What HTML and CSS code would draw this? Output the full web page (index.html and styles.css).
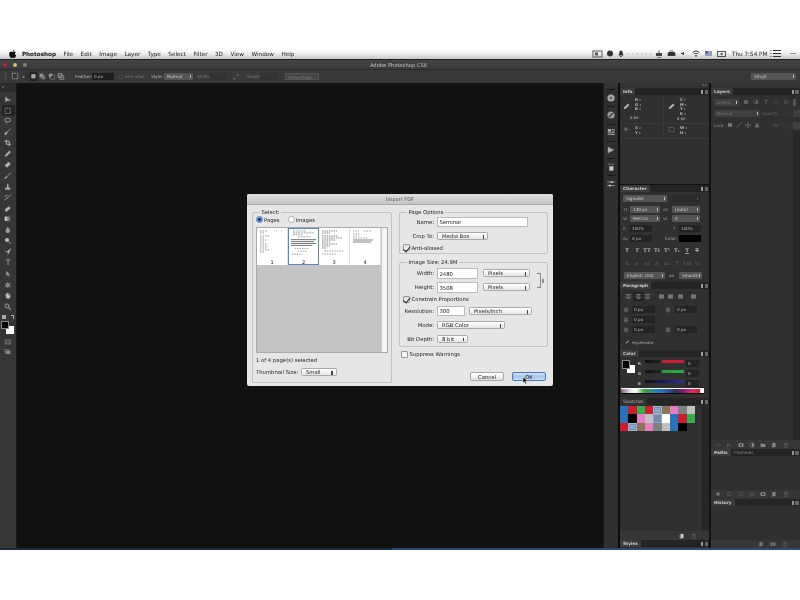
FILE: index.html
```html
<!DOCTYPE html>
<html lang="en">
<head>
<meta charset="utf-8">
<title>Adobe Photoshop CS6 - Import PDF</title>
<link rel="stylesheet" href="styles.css">
</head>
<body>
<svg class="defs" aria-hidden="true">
  <symbol id="trash" viewBox="0 0 10 10"><path d="M2 2.5h6M4 2.5V1.5h2v1M3 3.5h4v5.500H3z" fill="none" stroke="currentColor"/></symbol>
  <symbol id="page" viewBox="0 0 10 10"><path d="M2.500 1.500h5v7h-5z" fill="currentColor"/><path d="M1.500 3v6.500h4" fill="none" stroke="currentColor" stroke-width=".6"/></symbol>
  <symbol id="folder" viewBox="0 0 10 10"><path d="M1 2.500h3l1 1h4v5H1z" fill="currentColor"/></symbol>
  <symbol id="link" viewBox="0 0 10 10"><path d="M1 5a2 2 0 0 1 2-2h1M1 5a2 2 0 0 0 2 2h1M9 5a2 2 0 0 0-2-2H6M9 5a2 2 0 0 1-2 2H6M3.500 5h3" fill="none" stroke="currentColor"/></symbol>
  <symbol id="mask" viewBox="0 0 10 10"><path fill-rule="evenodd" d="M1 2h8v6.500H1zM5 3.500a1.700 1.700 0 1 0 .01 0z" fill="currentColor"/></symbol>
  <symbol id="adj" viewBox="0 0 10 10"><circle cx="5" cy="5" r="3.500" fill="none" stroke="currentColor"/><path d="M5 1.500a3.500 3.500 0 0 1 0 7z" fill="currentColor"/></symbol>
  <symbol id="dot" viewBox="0 0 10 10"><circle cx="5" cy="5" r="3" fill="currentColor"/></symbol>
  <symbol id="ring" viewBox="0 0 10 10"><circle cx="5" cy="5" r="3" fill="none" stroke="currentColor"/></symbol>
  <symbol id="sel" viewBox="0 0 10 10"><rect x="2" y="2" width="6" height="6" fill="none" stroke="currentColor" stroke-dasharray="1.500 1"/></symbol>
  <symbol id="diamond" viewBox="0 0 10 10"><path d="M5 1l4 4-4 4-4-4z" fill="none" stroke="currentColor"/></symbol>
  <symbol id="cam" viewBox="0 0 10 10"><path fill-rule="evenodd" d="M1 2.500h8v6H1zM5 4a1.300 1.300 0 1 0 .01 0z" fill="currentColor"/></symbol>
  <symbol id="lock" viewBox="0 0 10 10"><path d="M2.500 4.500h5v4.500h-5z" fill="currentColor"/><path d="M3.500 4.500V3a1.500 1.500 0 0 1 3 0v1.500" fill="none" stroke="currentColor"/></symbol>
  <symbol id="move" viewBox="0 0 10 10"><path d="M5 .5v9M.5 5h9M3.500 2L5 .5 6.500 2M3.500 8L5 9.500 6.500 8M2 3.500L.5 5 2 6.500M8 3.500L9.500 5 8 6.500" fill="none" stroke="currentColor"/></symbol>
  <symbol id="picker" viewBox="0 0 10 10"><path d="M1 9l1-3 4-4 2 2-4 4z" fill="currentColor"/><path d="M6.500 1.500l2 2" stroke="currentColor" stroke-width="2"/></symbol>
  <symbol id="block" viewBox="0 0 10 10"><rect x="1.500" y="2" width="7" height="6" fill="currentColor"/></symbol>
  <symbol id="lines" viewBox="0 0 10 10"><path d="M1 2h8M2.500 4h5M1 6h8M2.500 8h5" fill="none" stroke="currentColor"/></symbol>
</svg>

<div class="screen">
  <header class="menubar">
    <svg class="apple" viewBox="0 0 10 12"><path d="M7.300 1c0 .9-.8 1.900-1.900 1.800C5.300 1.900 6.200 1 7.300 1zM5.200 3.500c.5 0 1.100-.5 2-.5.700 0 1.400.3 1.900 1-1.600 1-1.300 3.100.4 3.800-.5 1.300-1.400 3-2.500 3-.6 0-.9-.4-1.700-.4s-1.100.4-1.700.4C2.500 10.800 1 8.400 1 6.300 1 4.200 2.300 3 3.600 3c.7 0 1.200.5 1.600.5z" fill="#111"/></svg>
    <nav class="menus">
      <span class="menu-app">Photoshop</span><span>File</span><span>Edit</span><span>Image</span><span>Layer</span><span>Type</span><span>Select</span><span>Filter</span><span>3D</span><span>View</span><span>Window</span><span>Help</span>
    </nav>
    <svg class="status" viewBox="0 0 138 11">
      <rect x="3" y="3" width="9" height="6" fill="none" stroke="#555"/><rect x="5" y="4.500" width="3" height="3" fill="#555"/>
      <circle cx="20" cy="5.500" r="3" fill="#333"/>
      <path d="M31 2.500c1.300 0 1.700 1 1.700 2.700l.8 2.300h-5l.8-2.300c0-1.700.4-2.700 1.700-2.700zM30.200 8h1.600v1h-1.600z" fill="#333"/>
      <path d="M38 6h.8M42.500 6h.8M47 6h.8M51 6h.8M55.500 6h.8M60 6h.8" stroke="#666" stroke-width=".8"/>
      <path d="M66 5h6v3h-6z" fill="#444"/><path d="M69 2v3M67 9.500h4" stroke="#555" stroke-width=".8"/>
      <path d="M78.500 4h6l.8 1.500v2.500h-7.600v-2.500z" fill="#333"/><path d="M79.500 3h4" stroke="#444" stroke-width=".8"/>
      <path d="M91 5h1.200l1.800-1.200v3.400L92.200 6H91z" fill="#333"/>
      <path d="M102.500 4.300a5.500 5.500 0 0 1 7 0M104 5.800a3.500 3.500 0 0 1 4 0" fill="none" stroke="#333" stroke-width=".9"/><circle cx="106" cy="7.800" r=".9" fill="#333"/>
      <rect x="115" y="3" width="7" height="5" fill="#9aa0c0"/><rect x="115" y="3" width="3" height="2.500" fill="#5f6a9c"/>
      <rect x="127.500" y="3.500" width="8" height="5" fill="none" stroke="#555"/><path d="M130 6l2.500-1.500v3z" fill="#444"/>
    </svg>
    <span class="clock">Thu 7:54 PM</span>
    <svg class="status-end" viewBox="0 0 33 11">
      <path d="M6 2.500h8M6 5.500h8M6 8.500h8" stroke="#333"/><path d="M3.500 2.500h1M3.500 5.500h1M3.500 8.500h1" stroke="#333"/>
      <path d="M23.500 5.500h1M25.500 5.500h1M27.500 5.500h1" stroke="#333" stroke-width="1.200"/>
    </svg>
  </header>

  <div class="titlebar">
    <span class="lights"><i class="light red"></i><i class="light amber"></i><i class="light grey"></i></span>
    <span class="app-title">Adobe Photoshop CS6</span>
  </div>

  <div class="options">
    <svg class="opt-icons" viewBox="0 0 70 14">
      <path d="M3.500 2v10" stroke="#555"/>
      <rect x="10.500" y="3.500" width="6" height="6" fill="none" stroke="#aaa" stroke-dasharray="1.500 1"/>
      <path d="M21 7h3l-1.500 1.500z" fill="#aaa"/>
      <path d="M26.500 2v10" stroke="#2a2a2a"/>
      <rect x="29" y="2" width="8.500" height="10" fill="#232323"/>
      <rect x="31" y="4.500" width="4.500" height="4.500" fill="#aaa"/>
      <rect x="40" y="4" width="4" height="4" fill="#999"/><rect x="42" y="6" width="4" height="4" fill="#777"/>
      <rect x="50" y="4" width="4" height="4" fill="#999"/><rect x="52" y="6" width="4" height="4" fill="#3a3a3a" stroke="#888" stroke-width=".5"/>
      <rect x="60" y="4" width="4" height="4" fill="none" stroke="#999"/><rect x="62" y="6" width="4" height="4" fill="none" stroke="#888"/>
    </svg>
    <label class="opt-text opt-feather">Feather:</label>
    <span class="dark-input opt-feather-in">0 px</span>
    <i class="opt-check"></i>
    <span class="opt-text opt-dim opt-anti">Anti-alias</span>
    <span class="opt-text opt-style">Style:</span>
    <span class="dark-select opt-style-sel">Normal</span>
    <span class="opt-text opt-dim opt-width">Width:</span>
    <span class="dark-input opt-width-in"></span>
    <svg class="opt-swap" viewBox="0 0 8 8"><path d="M1 7l2-2M5 1h2v2M7 1L5 3M1 5v2h2" fill="none" stroke="#777"/></svg>
    <span class="opt-text opt-dim opt-height">Height:</span>
    <span class="dark-input opt-height-in"></span>
    <span class="opt-button">Refine Edge...</span>
    <span class="dark-select opt-workspace">Strojit</span>
  </div>

  <main class="workspace">
    <aside class="tools">
      <div class="tools-head">&#187;</div>
      <div class="tool"><svg viewBox="0 0 10 10"><path d="M2 1v7l2-2h3zM6 5h3M7.500 3.500v3" fill="#aaa" stroke="#aaa" stroke-width=".6"/></svg></div>
      <div class="tool tool-on"><svg viewBox="0 0 10 10"><rect x="1.500" y="1.500" width="7" height="7" fill="none" stroke="#bbb" stroke-dasharray="1.500 1"/></svg></div>
      <div class="tool"><svg viewBox="0 0 10 10"><ellipse cx="5" cy="4" rx="4" ry="2.500" fill="none" stroke="#aaa"/><path d="M3 6c0 2 1 2.500 .5 3.500" fill="none" stroke="#aaa"/></svg></div>
      <div class="tool"><svg viewBox="0 0 10 10"><path d="M9 1L4 5.500M1 9c0-2 1-3.500 3-3.500 .5 2-1 3.500-3 3.500z" fill="#aaa" stroke="#aaa"/></svg></div>
      <div class="tool"><svg viewBox="0 0 10 10"><path d="M3 .5V7h6.500M.5 3H7v6.500" fill="none" stroke="#bbb" stroke-width="1.200"/></svg></div>
      <div class="tool"><svg viewBox="0 0 10 10"><use href="#picker" color="#aaa"/></svg></div>
      <div class="tool"><svg viewBox="0 0 10 10"><path d="M2 6l4-4 2 2-4 4z" fill="#bbb" stroke="#aaa" stroke-width="1.500" stroke-linejoin="round"/></svg></div>
      <div class="tool"><svg viewBox="0 0 10 10"><path d="M9 1L3.500 6.500M1 9l2-3 1 1z" fill="#aaa" stroke="#aaa"/></svg></div>
      <div class="tool"><svg viewBox="0 0 10 10"><path d="M4 1h2v4h-.5l3 2v2h-7V7l3-2H4z" fill="#aaa"/></svg></div>
      <div class="tool"><svg viewBox="0 0 10 10"><path d="M9 1L4 5.500M1 8.500c1-3 3-3 3.500-2.500M1 4a3 3 0 0 1 4-2" fill="none" stroke="#aaa"/></svg></div>
      <div class="tool"><svg viewBox="0 0 10 10"><path d="M1 6l5-4 3 2-5 4.500H2z" fill="#b4b4b4"/></svg></div>
      <div class="tool"><svg viewBox="0 0 10 10"><defs><linearGradient id="gr"><stop offset="0" stop-color="#ddd"/><stop offset="1" stop-color="#444"/></linearGradient></defs><rect x="1" y="2" width="8" height="6" fill="url(#gr)"/></svg></div>
      <div class="tool"><svg viewBox="0 0 10 10"><path d="M5 1c1 2 3 3.500 3 5.300a3 3 0 0 1-6 0C2 4.500 4 3 5 1z" fill="#999"/></svg></div>
      <div class="tool"><svg viewBox="0 0 10 10"><circle cx="4" cy="4" r="2.800" fill="#bbb"/><path d="M6 6l3 3" stroke="#aaa" stroke-width="1.300"/></svg></div>
      <div class="tool"><svg viewBox="0 0 10 10"><path d="M9 1L6 7 4 5zM4 5L1 4M6 7l-1 2.500" fill="#bbb" stroke="#aaa" stroke-width=".8"/></svg></div>
      <div class="tool tool-type">T</div>
      <div class="tool"><svg viewBox="0 0 10 10"><path d="M3 1v7l2-1.500L7 9l.7-.5-1.500-2.500H8z" fill="#999"/></svg></div>
      <div class="tool"><svg viewBox="0 0 10 10"><path d="M5 1l1.200 2.500L9 3 7.500 5.500 9 8l-2.800-.5L5 9.500 3.800 7.500 1 8l1.500-2.500L1 3l2.800.5z" fill="#888"/></svg></div>
      <div class="tool"><svg viewBox="0 0 10 10"><path d="M2 5V3l1 1V1.500L4 1l.5 3V1h1l.3 3 .7-2.500 1 .3L7 5l1.500-1 .5.500L7.500 8.500h-4z" fill="#bbb"/></svg></div>
      <div class="tool"><svg viewBox="0 0 10 10"><circle cx="4" cy="4" r="2.700" fill="none" stroke="#aaa" stroke-width="1.200"/><path d="M6 6l3 3" stroke="#aaa" stroke-width="1.400"/></svg></div>
      <div class="tool-swap"><i class="mini-a"></i><i class="mini-b"></i></div>
      <div class="chips"><i class="chip-bg"></i><i class="chip-fg"></i></div>
      <div class="tool tool-mode"><svg viewBox="0 0 10 10"><use href="#mask" color="#666"/></svg></div>
      <div class="tool tool-mode"><svg viewBox="0 0 10 10"><path d="M2 3.500h6.500v4.500H2z" fill="#888"/><path d="M1 6V2h6" fill="none" stroke="#777"/></svg></div>
    </aside>

    <div class="canvas"></div>

    <aside class="dock">
      <div class="strip"></div>
      <div class="dock-item"><svg viewBox="0 0 10 10"><circle cx="5" cy="5" r="4.500" fill="#aaa"/><circle cx="5" cy="5" r="2" fill="#666"/></svg></div>
      <div class="dock-item"><svg viewBox="0 0 10 10"><circle cx="5" cy="5" r="4.500" fill="#999"/><path d="M2 8l6-6" stroke="#333" stroke-width="1.500"/></svg></div>
      <div class="dock-item"><svg viewBox="0 0 10 10"><rect x="1" y="1.500" width="4" height="3" fill="#bbb"/><path d="M6 2h3.500M6 4h3.500M1 6h8.500M1 8h8.500" stroke="#bbb"/></svg></div>
      <div class="dock-item"><svg viewBox="0 0 10 10"><path d="M1 1v8l8-4z" fill="#aaa"/></svg></div>
      <div class="dock-item"><svg viewBox="0 0 10 10"><path d="M3 4h5v5.500H3z" fill="#ccc"/><path d="M2 .5h2v2H2zM6 .5h2v2H6z" fill="#888"/></svg></div>
      <div class="dock-item"><svg viewBox="0 0 10 10"><path d="M.5 2.500h9M.5 7h9" stroke="#bbb"/><rect x="5" y="1.200" width="2" height="2.600" fill="#bbb"/><rect x="2.500" y="5.700" width="2" height="2.600" fill="#bbb"/></svg></div>
    </aside>

    <div class="gutter"></div>

    <aside class="col col-a">
      <div class="strip strip-arrow">&#171;&#187;</div>

      <section class="panel info">
        <div class="phead"><span class="tab">Info</span><span class="pmenu"></span></div>
        <div class="info-row info-top">
          <div class="info-cell">
            <svg class="info-ic" viewBox="0 0 10 10"><use href="#picker" color="#bbb"/></svg>
            <div class="info-vals"><span>R :</span><span>G :</span><span>B :</span><span class="bit">8-bit</span></div>
          </div>
          <div class="info-cell">
            <svg class="info-ic" viewBox="0 0 10 10"><use href="#picker" color="#bbb"/></svg>
            <div class="info-vals"><span>C :</span><span>M :</span><span>Y :</span><span>K :</span><span class="bit-k">8-bit</span></div>
          </div>
        </div>
        <div class="info-row info-bot">
          <div class="info-cell">
            <svg class="info-ic" viewBox="0 0 10 10"><path d="M4 1v7M1 4.500h7" stroke="#888"/></svg>
            <div class="info-vals"><span>X :</span><span>Y :</span></div>
          </div>
          <div class="info-cell">
            <svg class="info-ic" viewBox="0 0 10 10"><rect x="1.500" y="2" width="7" height="6" fill="none" stroke="#888" stroke-dasharray="1.500 1"/></svg>
            <div class="info-vals"><span>W :</span><span>H :</span></div>
          </div>
        </div>
      </section>

      <section class="panel character">
        <div class="phead"><span class="tab">Character</span><span class="pmenu"></span></div>
        <div class="crow crow-font"><span class="dark-select w44">Signalist</span><span class="dark-select w28 off"></span></div>
        <div class="crow crow-10">
          <span class="cic">T&#8597;</span><span class="dark-select w30">130 px</span>
          <span class="cic cic-r">A&#8597;</span><span class="dark-select w28">(Auto)</span>
        </div>
        <div class="crow crow-9">
          <span class="cic">VA</span><span class="dark-select w30">Metrics</span>
          <span class="cic cic-r">VA</span><span class="dark-select w28">0</span>
        </div>
        <div class="crow crow-11">
          <span class="cic">IT</span><span class="dark-input w22">100%</span>
          <span class="cic cic-far">T</span><span class="dark-input w22">100%</span>
        </div>
        <div class="crow crow-8">
          <span class="cic">Aa</span><span class="dark-input w22">0 px</span>
          <span class="ctxt">Color:</span><span class="color-well"></span>
        </div>
        <div class="glyphs glyphs-on"><span>T</span><span><em>T</em></span><span>TT</span><span>Tt</span><span>T&#185;</span><span>T&#8321;</span><span><u>T</u></span><span><s>T</s></span></div>
        <div class="glyphs glyphs-off"><span>fi</span><span><em>o</em></span><span>st</span><span><em>A</em></span><span>aa</span><span>T</span><span>1st</span><span>&#189;</span></div>
        <div class="crow crow-lang"><span class="dark-select w41">English: USA</span><span class="ctxt aa">aa</span><span class="dark-select w23">Smooth</span></div>
      </section>

      <section class="panel paragraph">
        <div class="phead"><span class="tab">Paragraph</span><span class="pmenu"></span></div>
        <div class="aligns">
          <svg class="al" viewBox="0 0 10 10"><use href="#lines" color="#888"/></svg>
          <svg class="al al-on" viewBox="0 0 10 10"><use href="#lines" color="#999"/></svg>
          <svg class="al" viewBox="0 0 10 10"><use href="#lines" color="#888"/></svg>
          <svg class="al al-gap" viewBox="0 0 10 10"><use href="#block" color="#777"/></svg>
          <svg class="al" viewBox="0 0 10 10"><use href="#block" color="#777"/></svg>
          <svg class="al" viewBox="0 0 10 10"><use href="#block" color="#777"/></svg>
          <svg class="al al-gap2" viewBox="0 0 10 10"><use href="#block" color="#777"/></svg>
        </div>
        <div class="prow prow-13">
          <svg class="pic" viewBox="0 0 10 10"><use href="#lines" color="#888"/></svg><span class="dark-input w23">0 px</span>
          <svg class="pic pic-r" viewBox="0 0 10 10"><use href="#lines" color="#888"/></svg><span class="dark-input w22">0 px</span>
        </div>
        <div class="prow prow-7"><svg class="pic" viewBox="0 0 10 10"><use href="#lines" color="#888"/></svg><span class="dark-input w23">0 px</span></div>
        <div class="prow prow-13">
          <svg class="pic" viewBox="0 0 10 10"><use href="#lines" color="#888"/></svg><span class="dark-input w23">0 px</span>
          <svg class="pic pic-r" viewBox="0 0 10 10"><use href="#lines" color="#888"/></svg><span class="dark-input w22">0 px</span>
        </div>
        <div class="hyph"><i class="mini-check">&#10003;</i><span>Hyphenate</span></div>
      </section>

      <section class="panel color">
        <div class="phead"><span class="tab">Color</span><span class="pmenu"></span></div>
        <div class="color-top">
          <div class="cchips"><i class="cchip-bg"></i><i class="cchip-fg"></i></div>
          <div class="sliders">
            <div class="slider"><span>R</span><i class="track t-r"></i><b class="dark-input w13">0</b></div>
            <div class="slider"><span>G</span><i class="track t-g"></i><b class="dark-input w13">0</b></div>
            <div class="slider"><span>B</span><i class="track t-b"></i><b class="dark-input w13">0</b></div>
          </div>
        </div>
        <div class="ramp"></div>
      </section>

      <section class="panel swatches">
        <div class="phead"><span class="tab tab-dim">Swatches</span><span class="pmenu"></span></div>
        <div class="sw-body">
          <div class="sw-grid">
            <i class="s blue"></i><i class="s red"></i><i class="s green"></i><i class="s red"></i><i class="s peri"></i><i class="s brown"></i><i class="s pink"></i><i class="s grey"></i><i class="s silver"></i>
            <i class="s blue"></i><i class="s black"></i><i class="s pink"></i><i class="s silver"></i><i class="s slate"></i><i class="s white"></i><i class="s blue"></i><i class="s red"></i><i class="s green"></i>
            <i class="s red"></i><i class="s peri"></i><i class="s brown"></i><i class="s pink"></i><i class="s grey"></i><i class="s silver"></i><i class="s blue"></i><i class="s black"></i>
          </div>
          <div class="track-v"></div>
        </div>
        <div class="pfoot pfoot-sw">
          <svg viewBox="0 0 10 10"><use href="#page" color="#ccc"/></svg>
          <svg viewBox="0 0 10 10"><use href="#trash" color="#666"/></svg>
        </div>
      </section>

      <section class="panel styles">
        <div class="phead"><span class="tab">Styles</span><span class="pmenu"></span></div>
      </section>
    </aside>

    <aside class="col col-b">
      <div class="strip"></div>

      <section class="panel layers">
        <div class="phead"><span class="tab">Layers</span><span class="pmenu"></span></div>
        <div class="lrow lrow-kind">
          <span class="dark-select lw25 mid">&#961; Kind</span>
          <span class="l-icons">
            <svg viewBox="0 0 10 10"><use href="#block" color="#666"/></svg>
            <svg viewBox="0 0 10 10"><use href="#adj" color="#666"/></svg>
            <svg viewBox="0 0 10 10"><path d="M2 2h6M5 2v6.500" stroke="#666" stroke-width="1.300"/></svg>
            <svg viewBox="0 0 10 10"><use href="#sel" color="#666"/></svg>
            <svg viewBox="0 0 10 10"><use href="#ring" color="#666"/></svg>
          </span>
          <i class="pill"></i>
        </div>
        <div class="lrow lrow-blend">
          <span class="dark-select lw46 mid">Normal</span>
          <span class="l-label">Opacity:</span><span class="dark-input lw11"></span><i class="l-arrow"></i>
        </div>
        <div class="lrow lrow-lock">
          <span class="l-lock">Lock:</span>
          <span class="l-icons l-icons-lock">
            <svg viewBox="0 0 10 10"><use href="#block" color="#777"/></svg>
            <svg viewBox="0 0 10 10"><path d="M9 1L3 7M1 9l2-2" stroke="#777" stroke-width="1.300"/></svg>
            <svg viewBox="0 0 10 10"><use href="#move" color="#777"/></svg>
            <svg viewBox="0 0 10 10"><use href="#lock" color="#777"/></svg>
          </span>
          <span class="l-fill">Fill:</span><span class="dark-input lw11"></span><i class="l-arrow"></i>
        </div>
        <div class="l-body"><div class="track-v"></div></div>
        <div class="pfoot pfoot-layers">
          <svg viewBox="0 0 10 10"><use href="#link" color="#555"/></svg>
          <svg viewBox="0 0 10 10"><text x="1" y="8" class="fx">fx</text></svg>
          <svg viewBox="0 0 10 10"><use href="#mask" color="#888"/></svg>
          <svg viewBox="0 0 10 10"><use href="#adj" color="#888"/></svg>
          <svg viewBox="0 0 10 10"><use href="#folder" color="#888"/></svg>
          <svg viewBox="0 0 10 10"><use href="#page" color="#888"/></svg>
          <svg viewBox="0 0 10 10"><use href="#trash" color="#666"/></svg>
        </div>
      </section>

      <section class="panel paths">
        <div class="phead"><span class="tab">Paths</span><span class="tab tab-off">Channels</span><span class="pmenu"></span></div>
        <div class="p-body"></div>
        <div class="pfoot pfoot-layers pfoot-paths">
          <svg viewBox="0 0 10 10"><use href="#dot" color="#777"/></svg>
          <svg viewBox="0 0 10 10"><use href="#ring" color="#666"/></svg>
          <svg viewBox="0 0 10 10"><use href="#sel" color="#666"/></svg>
          <svg viewBox="0 0 10 10"><use href="#diamond" color="#888"/></svg>
          <svg viewBox="0 0 10 10"><use href="#mask" color="#888"/></svg>
          <svg viewBox="0 0 10 10"><use href="#page" color="#888"/></svg>
          <svg viewBox="0 0 10 10"><use href="#trash" color="#666"/></svg>
        </div>
      </section>

      <section class="panel history">
        <div class="phead"><span class="tab">History</span><span class="pmenu"></span></div>
        <div class="p-body"></div>
        <div class="pfoot pfoot-hist">
          <svg viewBox="0 0 10 10"><use href="#page" color="#777"/></svg>
          <svg viewBox="0 0 10 10"><use href="#cam" color="#777"/></svg>
          <svg viewBox="0 0 10 10"><use href="#trash" color="#666"/></svg>
        </div>
      </section>
    </aside>
  </main>

  <div class="navy"></div>

  <div class="dialog">
    <div class="dlg-title">Import PDF</div>
    <div class="dlg-body">
      <fieldset class="group group-select">
        <legend>Select:</legend>
        <div class="radios">
          <span class="radio radio-on"></span><span>Pages</span>
          <span class="radio radio-next"></span><span>Images</span>
        </div>
        <div class="thumbs">
          <div class="thumb-row">
            <div class="thumb">
              <svg viewBox="0 0 30 31"><path d="M3 3h8M3 5h5M3 8h9M3 10h5M3 12h7M3 14h5M3 16h7M3 18h8M3 20h7M3 22h10M3 24h5" stroke="#555" stroke-dasharray="1.500 1"/><path d="M17 3h3M24 3h2" stroke="#888" stroke-dasharray="1 1"/></svg>
              <span>1</span>
            </div>
            <div class="thumb thumb-on">
              <svg viewBox="0 0 30 31"><path d="M4 2h14M4 4h22M4 6h10M9 8h14" stroke="#666" stroke-dasharray="2 .8"/><path d="M2 11h26M2 13h24M2 15h26M2 17h22" stroke="#111"/><path d="M6 20h14M9 23h10M3 26h11" stroke="#555" stroke-dasharray="1.500 1"/></svg>
              <span>2</span>
            </div>
            <div class="thumb">
              <svg viewBox="0 0 30 31"><path d="M3 3h15M3 5h8M3 8h16M3 10h20M3 12h14M3 14h9M3 16h15M3 18h8M3 20h5" stroke="#333" stroke-dasharray="1.500 .8"/><path d="M5 23h19M3 26h15" stroke="#666" stroke-dasharray="1.500 1"/></svg>
              <span>3</span>
            </div>
            <div class="thumb">
              <svg viewBox="0 0 30 31"><path d="M3 3h6M14 3h8M3 6h7M3 8h6M3 10h14" stroke="#666" stroke-dasharray="1.500 1"/><path d="M3 12h20M3 14h18" stroke="#333"/></svg>
              <span>4</span>
            </div>
          </div>
          <div class="thumb-fill"></div>
          <div class="thumb-scroll"></div>
        </div>
        <div class="sel-count">1 of 4 page(s) selected</div>
        <div class="thumb-size"><span>Thumbnail Size:</span><span class="mac-select ms-small">Small</span></div>
      </fieldset>

      <div class="dlg-right">
        <fieldset class="group group-page">
          <legend>Page Options</legend>
          <div class="frow"><label>Name:</label><span class="mac-input mi-name">Seminar</span></div>
          <div class="frow"><label>Crop To:</label><span class="mac-select ms-crop">Media Box</span></div>
          <div class="frow frow-check"><i class="check"></i><span>Anti-aliased</span></div>
        </fieldset>

        <fieldset class="group group-size">
          <legend>Image Size: 24.9M</legend>
          <div class="linked">
            <div class="linked-rows">
              <div class="frow"><label>Width:</label><span class="mac-input mi-dim">2480</span><span class="mac-select ms-unit">Pixels</span></div>
              <div class="frow"><label>Height:</label><span class="mac-input mi-dim">3508</span><span class="mac-select ms-unit">Pixels</span></div>
            </div>
            <div class="bracket"></div>
            <svg class="chain" viewBox="0 0 4 8"><path d="M.8 1h2.400v3H.800zM.8 4h2.400v3H.800z" fill="none" stroke="#555" stroke-width=".8"/></svg>
          </div>
          <div class="frow frow-check frow-10"><i class="check"></i><span>Constrain Proportions</span></div>
          <div class="frow"><label>Resolution:</label><span class="mac-input mi-res">300</span><span class="mac-select ms-res">Pixels/Inch</span></div>
          <div class="frow"><label>Mode:</label><span class="mac-select ms-mode">RGB Color</span></div>
          <div class="frow frow-13"><label>Bit Depth:</label><span class="mac-select ms-bit">8 bit</span></div>
        </fieldset>

        <div class="suppress"><i class="check check-off"></i><span>Suppress Warnings</span></div>

        <div class="buttons">
          <span class="btn">Cancel</span>
          <span class="btn btn-default">OK</span>
        </div>
      </div>
    </div>
    <svg class="cursor" viewBox="0 0 8 12"><path d="M1 1v8.500l2-2 1.300 3 1.500-.7L4.500 7h2.800z" fill="#000" stroke="#fff" stroke-width=".7"/></svg>
  </div>
</div>
</body>
</html>
```

FILE: styles.css
```css
* { box-sizing: border-box; }
html, body { margin: 0; padding: 0; background: #fff; }
body { width: 800px; height: 600px; overflow: hidden; font-family: "DejaVu Sans", sans-serif; }
.defs { position: absolute; width: 0; height: 0; }
i, em { font-style: normal; }
svg { display: block; }

.screen { position: relative; width: 800px; height: 600px; padding-top: 48px; filter: blur(.42px); display: flex; flex-direction: column; }

/* mac menu bar */
.menubar { height: 11px; flex: none; display: flex; align-items: center; background: linear-gradient(#fff, #f4f4f4 40%, #c8c8c8); color: #222; font-size: 5.700px; }
.apple { width: 9px; height: 10px; margin-left: 8px; }
.menus { display: flex; gap: 7.500px; margin-left: 5px; width: 574px; }
.menu-app { font-weight: 700; color: #111; margin-right: 0; }
.status { width: 138px; height: 11px; flex: none; }
.clock { width: 39px; padding-left: 4px; flex: none; white-space: nowrap; }
.status-end { width: 33px; height: 11px; flex: none; }

/* app title bar */
.titlebar { height: 10px; flex: none; display: flex; align-items: center; background: linear-gradient(#444, #3a3a3a); border-top: 1px solid #222; position: relative; color: #c4c4c4; font-size: 5.200px; }
.lights { display: flex; gap: 6px; margin-left: 3px; }
.light { width: 4px; height: 4px; border-radius: 50%; display: block; }
.red { background: #d0605a; }
.amber { background: #e0ba7a; }
.grey { background: #9a9a9a; }
.app-title { flex: 1; text-align: center; padding-right: 30px; }

/* options bar */
.options { height: 14px; flex: none; display: flex; align-items: center; background: #383838; border-top: 1px solid #2a2a2a; font-size: 4.200px; color: #bbb; }
.opt-icons { width: 70px; height: 13px; flex: none; }
.opt-text { white-space: nowrap; }
.opt-dim { color: #777; }
.opt-feather { margin-left: 5px; width: 17px; }
.dark-input { display: block; height: 7px; line-height: 7px; padding-left: 2px; background: #232323; color: #bbb; font-size: 4.200px; font-weight: 400; white-space: nowrap; }
.dark-select { display: block; position: relative; height: 7px; line-height: 7px; padding-left: 3px; background: #555; color: #ccc; font-size: 4.200px; white-space: nowrap; border-radius: 1px; }
.dark-select::after { content: ""; position: absolute; right: 2px; top: 2px; width: 1.500px; height: 3px; background: #bbb; }
.opt-feather-in { width: 22px; background: #1e1e1e; }
.opt-check { display: block; width: 4px; height: 4px; background: #303030; border: .5px solid #444; margin-left: 5px; }
.opt-anti { margin-left: 2px; width: 26px; }
.opt-style { width: 13px; }
.opt-style-sel { width: 29px; }
.opt-width { margin-left: 4px; width: 13px; }
.opt-width-in { width: 17px; background: #333; }
.opt-swap { width: 6px; height: 6px; margin-left: 6px; }
.opt-height { margin-left: 7px; width: 14px; }
.opt-height-in { width: 17px; background: #333; }
.opt-button { display: block; margin-left: 8px; width: 34px; height: 7px; line-height: 7px; text-align: center; background: #454545; border: .5px solid #555; color: #777; font-size: 4px; }
.opt-workspace { margin-left: auto; margin-right: 4px; width: 45px; }

/* workspace */
.workspace { height: 465px; flex: none; display: flex; background: #111; overflow: hidden; }
.tools { width: 17px; flex: none; background: #363636; border-right: 1px solid #1c1c1c; display: flex; flex-direction: column; align-items: center; }
.tools-head { width: 100%; height: 9px; flex: none; line-height: 7px; padding-left: 2px; font-size: 4px; color: #bbb; background: #2b2b2b; margin-bottom: 2px; }
.tool { width: 13px; height: 10.900px; flex: none; display: flex; align-items: center; justify-content: center; }
.tool svg { width: 7.500px; height: 7.500px; }
.tool-on { background: #232323; }
.tool-type { color: #aaa; font-size: 7.500px; line-height: 1; }
.tool-swap { width: 14px; height: 8px; margin-top: 1px; display: flex; justify-content: space-between; align-items: center; padding: 0 1px; }
.mini-a, .mini-b { display: block; width: 3.500px; height: 3.500px; background: #aaa; }
.mini-b { background: none; border-top: 1px solid #aaa; border-right: 1px solid #aaa; }
.chips { position: relative; width: 14px; height: 13px; flex: none; margin-bottom: 2px; }
.chip-fg { position: absolute; left: 0; top: 0; width: 8px; height: 8px; background: #000; border: 1px solid #888; }
.chip-bg { position: absolute; left: 5px; top: 5px; width: 8px; height: 8px; background: #fff; }
.canvas { flex: 1; background: #111; }
.dock { width: 15px; flex: none; background: #2f2f2f; display: flex; flex-direction: column; border-left: 1px solid #1c1c1c; }
.strip { height: 5px; flex: none; background: #333; }
.strip-arrow { font-size: 4px; line-height: 4px; text-align: right; padding-right: 2px; color: #aaa; }
.dock-item { height: 17.300px; flex: none; display: flex; align-items: center; justify-content: center; padding-top: 2px; position: relative; }
.dock-item::before { content: ""; position: absolute; left: 3px; right: 3px; top: 1px; height: 1px; background: #151515; }
.dock-item svg { width: 8px; height: 8px; }
.gutter { width: 2px; flex: none; background: #0d0d0d; }

.col { flex: none; display: flex; flex-direction: column; background: #111; }
.col-a { width: 89px; }
.col-b { width: 89px; margin-left: 2px; }
.panel { background: #303030; display: flex; flex-direction: column; flex: none; overflow: hidden; color: #aaa; font-size: 4.200px; }
.phead { height: 7px; flex: none; display: flex; align-items: stretch; background: #242424; position: relative; }
.tab { padding: 0 3px; line-height: 7px; font-size: 4.300px; font-weight: 700; color: #ccc; background: #3a3a3a; white-space: nowrap; }
.tab-dim { background: #333; color: #aaa; font-weight: 400; }
.tab-off { background: none; color: #888; font-weight: 400; }
.pmenu { position: absolute; right: 1px; top: 1.500px; width: 7px; height: 4px; background: linear-gradient(90deg, #999 0 2px, transparent 2px 3.500px, #666 3.500px); }

/* info */
.info { height: 96px; margin-bottom: 1px; }
.info-row { display: grid; grid-template-columns: 44px 45px; flex: none; }
.info-top { height: 29px; border-bottom: 1px solid #3a3a3a; }
.info-bot { height: 15px; border-bottom: 1px solid #3a3a3a; }
.info-cell { display: flex; gap: 5px; padding: 3px 0 0 3px; border-right: 1px solid #3a3a3a; height: 100%; }
.info-cell + .info-cell { border-right: 0; padding-left: 4px; }
.info-ic { width: 7px; height: 7px; margin-top: 5px; flex: none; }
.info-vals { display: flex; flex-direction: column; font-size: 3.800px; line-height: 4.700px; font-weight: 700; color: #bbb; }
.bit { margin: 4px 0 0 -5px; font-weight: 400; }
.bit-k { margin-left: -3px; font-weight: 400; }
.info-bot .info-ic { margin-top: 0; }
.info-bot .info-cell { padding-top: 2px; }

/* character */
.character { height: 97px; }
.crow { display: flex; align-items: center; padding-left: 3px; flex: none; }
.crow-font { height: 12px; gap: 5px; }
.crow-10 { height: 10px; }
.crow-9 { height: 9px; }
.crow-11 { height: 11px; }
.crow-8 { height: 8px; }
.crow-lang { height: 14px; padding-left: 4px; }
.cic { width: 7px; font-size: 3.800px; color: #999; letter-spacing: -.3px; white-space: nowrap; overflow: hidden; }
.cic-r { margin-left: 3px; width: 9px; }
.cic-far { margin-left: 21px; width: 6px; }
.ctxt { font-size: 4.200px; color: #aaa; margin-left: 13px; width: 14px; }
.aa { margin-left: 4px; width: 10px; }
.w44 { width: 44px; }
.w28 { width: 28px; }
.w30 { width: 30px; }
.w22 { width: 22px; }
.w23 { width: 23px; }
.w41 { width: 41px; }
.w13 { width: 13px; }
.off { background: #2a2a2a; }
.off::after { background: #555; }
.color-well { display: block; width: 22px; height: 7px; background: #000; }
.glyphs { display: grid; grid-template-columns: repeat(8, 10px); padding-left: 2px; text-align: center; font-family: "DejaVu Serif", serif; font-weight: 700; font-size: 5px; flex: none; }
.glyphs em { font-style: italic; }
.glyphs-on { height: 16px; line-height: 16px; color: #aaa; }
.glyphs-off { height: 10px; line-height: 10px; color: #555; }

/* paragraph */
.paragraph { height: 68px; }
.aligns { height: 14px; display: flex; align-items: center; padding-left: 5px; gap: 2.500px; flex: none; }
.al { width: 7px; height: 7px; }
.al-on { background: #222; outline: 1px solid #222; }
.al-gap { margin-left: 4px; }
.al-gap2 { margin-left: 4px; }
.prow { display: flex; align-items: center; padding-left: 3px; flex: none; }
.prow-13 { height: 13px; }
.prow-7 { height: 7px; }
.pic { width: 6px; height: 6px; margin-right: 3px; }
.pic-r { margin-left: 10px; margin-right: 4px; }
.hyph { height: 12px; display: flex; align-items: center; gap: 1px; padding-left: 5px; font-size: 3.900px; }
.mini-check { display: block; width: 6px; font-size: 6px; line-height: 6px; color: #ccc; }

/* color */
.color { height: 48px; }
.color-top { display: flex; height: 31px; flex: none; padding: 1px 0 0 2px; }
.cchips { position: relative; width: 13px; height: 14px; margin-top: 2px; flex: none; }
.cchip-fg { position: absolute; left: 0; top: 0; width: 8px; height: 9px; background: #000; border: 1px solid #888; }
.cchip-bg { position: absolute; left: 5px; top: 5px; width: 8px; height: 8px; background: #fff; }
.sliders { margin-left: 3px; }
.slider { height: 10px; display: flex; align-items: center; font-size: 3.800px; color: #bbb; font-weight: 700; }
.slider span { width: 7px; }
.track { display: block; width: 39px; height: 3px; margin: 0 2px 3px 0; }
.t-r { background: linear-gradient(90deg, #111, #222 40%, #c02030 45%, #cf1f33); }
.t-g { background: linear-gradient(90deg, #111, #222 40%, #2a9a40 45%, #30aa45); }
.t-b { background: linear-gradient(90deg, #111, #1a1a5a 50%, #33339a); }
.ramp { height: 6px; width: 83px; margin-left: 1px; flex: none; background:
  linear-gradient(#fff 0 1px, transparent 1px 5px, #000 5px),
  linear-gradient(90deg, #8a6060, #eee 12%, #fff 18%, #40a040 28%, #2080c0 45%, #3060b0 55%, #303060 65%, #802060 75%, #e0307a 85%, #d02030 95%, #fff 96%); }

/* swatches */
.swatches { height: 142px; }
.sw-body { flex: 1; display: flex; justify-content: space-between; padding-top: 1px; }
.sw-grid { display: grid; grid-template-columns: repeat(9, 8.330px); grid-auto-rows: 8.330px; align-content: start; width: 75px; }
.s { display: block; }
.blue { background: #2a72b8; }
.red { background: #c81e2e; }
.green { background: #34ad4a; }
.peri { background: #8fa6c9; border: 1.500px solid #a0b4d4; box-shadow: inset 0 0 0 1px #7d8fb4; }
.brown { background: #8a7359; }
.pink { background: #e57fc4; }
.grey { background: #808080; }
.silver { background: #c0c0c0; }
.black { background: #000; }
.white { background: #fff; }
.slate { background: #7589a8; border: 1px solid #8fa6c9; }
.track-v { width: 7px; background: #272727; }
.pfoot { height: 9px; flex: none; display: flex; align-items: center; background: #363636; }
.pfoot svg { width: 6px; height: 6px; }
.pfoot-sw { justify-content: flex-end; gap: 6px; padding-right: 12px; }
.styles { height: 8px; }

/* layers */
.layers { height: 361px; }
.lrow { display: flex; align-items: center; padding-left: 3px; flex: none; }
.lrow-kind { height: 12px; margin-top: 1px; }
.lrow-blend { height: 11px; }
.lrow-lock { height: 12px; }
.lw25 { width: 25px; }
.lw46 { width: 46px; }
.lw11 { width: 11px; background: #333; }
.mid { background: #3f3f3f; color: #777; }
.l-icons { display: flex; gap: 4px; margin-left: 4px; }
.l-icons svg { width: 6px; height: 6px; }
.pill { display: block; width: 3px; height: 7px; margin-left: 4px; background: #555; }
.l-label { width: 19px; margin-left: 2px; color: #666; font-size: 4px; white-space: nowrap; }
.l-arrow { display: block; width: 7px; height: 7px; margin-left: 1px; background: #3f3f3f; }
.l-lock { width: 10px; color: #999; font-size: 4px; }
.l-icons-lock { margin-left: 3px; gap: 3px; }
.l-fill { margin-left: 13px; width: 8px; color: #666; font-size: 4px; }
.l-body { flex: 1; display: flex; justify-content: flex-end; }
.pfoot-layers { gap: 5.300px; padding-left: 4px; }
.fx { font-size: 8px; fill: #777; font-family: "DejaVu Serif", serif; font-style: italic; }
.paths { height: 50px; }
.p-body { flex: 1; }
.pfoot-paths { height: 8px; margin-bottom: 1px; }
.history { height: 49px; }
.pfoot-hist { height: 8px; justify-content: flex-end; gap: 6px; padding-right: 12px; }

.navy { height: 2px; flex: none; background: linear-gradient(90deg, #1c2a40 49%, #2b4a7c 49%); }

/* dialog overlay */
.dialog { position: absolute; left: 247px; top: 194px; width: 306px; height: 192px; background: #e6e6e6; border-radius: 2px; display: flex; flex-direction: column; font-size: 5.300px; color: #1c1c1c; }
.dlg-title { height: 11px; flex: none; line-height: 11px; text-align: center; font-size: 5px; color: #555; background: linear-gradient(#dedede, #c6c6c6); border-bottom: 1px solid #aaa; border-radius: 2px 2px 0 0; }
.dlg-body { flex: 1; display: flex; gap: 7px; padding: 4px 5px 3px; }
.group { margin: 0; padding: 0 3px; border: 1px solid #c2c2c2; border-radius: 2px; min-width: 0; }
.group legend { padding: 0 1.500px; margin-left: 4px; height: 6px; line-height: 6px; white-space: nowrap; }
.group-select { width: 140px; height: 174px; flex: none; }
.radios { height: 9px; display: flex; align-items: center; gap: 1px; }
.radio { display: block; width: 7px; height: 7px; border-radius: 50%; background: #fff; border: 1px solid #aaa; }
.radio-on { background: radial-gradient(circle, #234 0 1.300px, #6fa0dc 1.500px); border-color: #4a80c0; }
.radio-next { margin-left: 7px; }
.thumbs { position: relative; width: 132px; height: 126px; margin-top: 3px; border: 1px solid #aaa; background: #c4c4c4; display: flex; flex-direction: column; }
.thumb-row { display: flex; flex: none; width: 124px; }
.thumb { width: 31px; height: 37px; background: #fff; display: flex; flex-direction: column; align-items: center; border-right: 1px solid #ddd; font-size: 5px; }
.thumb svg { width: 30px; height: 31px; flex: none; }
.thumb svg path { stroke-width: .6; }
.thumb span { line-height: 6px; color: #222; }
.thumb-on { border: 1px solid #5a86bc; }
.thumb-on svg { width: 29px; height: 30px; }
.thumb-fill { flex: 1; width: 124px; background: #c4c4c4; }
.thumb-scroll { position: absolute; right: 0; top: 0; bottom: 0; width: 6px; background: #f4f4f4; border-left: 1px solid #ccc; }
.sel-count { height: 8px; line-height: 8px; margin-top: 3px; }
.thumb-size { display: flex; align-items: center; gap: 2.500px; height: 10px; margin-top: 3px; }
.mac-select { position: relative; display: block; height: 8px; line-height: 7.500px; padding-left: 4px; background: linear-gradient(#fff, #f4f4f4 50%, #e4e4e4); border: .5px solid #aaa; border-radius: 1.500px; color: #222; font-size: 5.300px; white-space: nowrap; }
.mac-select::after { content: ""; position: absolute; right: 3px; top: 2px; width: 1.500px; height: 3.500px; background: #444; }
.ms-small { width: 36px; }
.ms-crop { width: 51px; }
.ms-unit { width: 47px; }
.ms-res { width: 63px; margin-left: 4px; }
.ms-mode { width: 68px; }
.ms-bit { width: 31px; }
.mac-input { display: block; height: 10px; line-height: 9px; padding-left: 1.500px; background: #fff; border: .5px solid #bbb; color: #222; font-size: 5.300px; }
.mi-name { width: 91px; }
.mi-dim { width: 41px; height: 11px; line-height: 10px; margin-right: 5px; }
.mi-res { width: 28px; }
.dlg-right { width: 149px; flex: none; display: flex; flex-direction: column; }
.group-page { height: 45px; }
.group-size { height: 88px; margin-top: 5px; }
.suppress { display: flex; align-items: center; gap: 1.500px; height: 8px; margin-top: 3px; padding-left: 2px; }
.frow { height: 14px; display: flex; align-items: center; }
.frow label { width: 31px; margin-right: 3px; text-align: right; white-space: nowrap; flex: none; }
.frow-check { height: 9px; gap: 1.500px; }
.frow-10 { height: 10px; }
.frow-13 { height: 13px; }
.check { display: block; position: relative; width: 7px; height: 7px; background: linear-gradient(#cfd9e6, #fff); border: .5px solid #999; border-radius: 1px; }
.check::after { content: ""; position: absolute; left: 1px; top: -.5px; width: 3px; height: 5.500px; border-right: 1.300px solid #223; border-bottom: 1.300px solid #223; transform: rotate(40deg); }
.check-off { background: #f6f6f6; }
.check-off::after { display: none; }
.linked { display: flex; margin-top: 1px; }
.linked-rows { width: 132px; flex: none; }
.bracket { width: 5px; height: 15px; margin: 7px 0 0 2px; border: 1px solid #888; border-left: 0; }
.chain { width: 4px; height: 8px; margin: 11px 0 0 1px; }
.buttons { margin-top: auto; margin-bottom: 2px; display: flex; justify-content: flex-end; gap: 8px; padding-right: 2px; }
.btn { display: block; width: 34px; height: 9px; line-height: 8.500px; text-align: center; background: linear-gradient(#fff, #f2f2f2 50%, #ddd); border: .5px solid #aaa; border-radius: 2px; }
.btn-default { background: linear-gradient(#cfe0f2, #a9c6e8 50%, #c5dbf2); border-color: #4a78b8; }
.cursor { position: absolute; left: 275px; top: 182px; width: 6.500px; height: 9px; }
```
